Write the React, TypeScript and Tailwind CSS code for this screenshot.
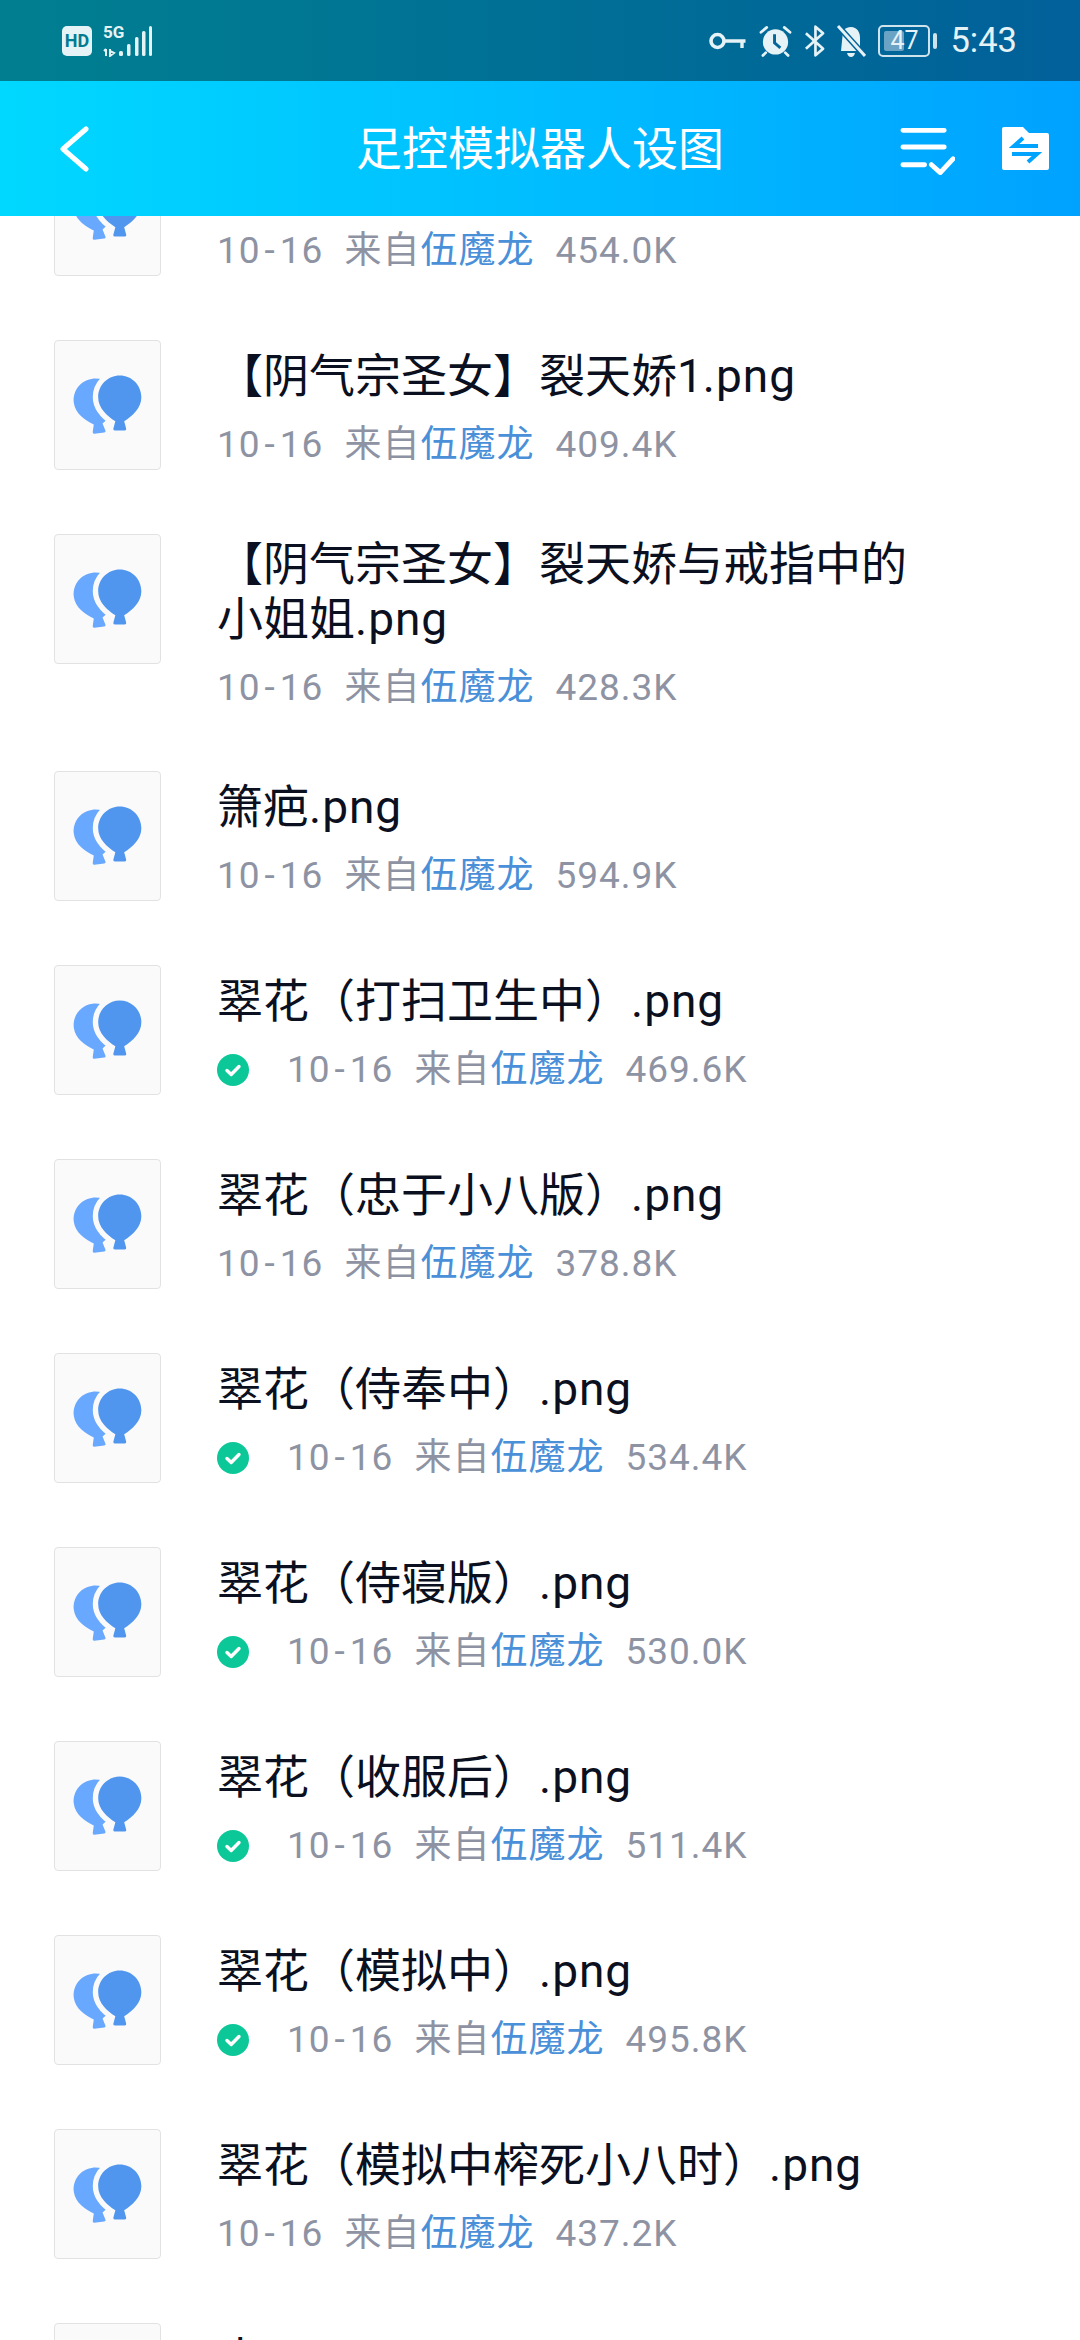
const files = [
  { title: "【阴气宗圣女】裂天娇.png", size: "454.0K" },
  { title: "【阴气宗圣女】裂天娇1.png", size: "409.4K" },
  { title: "【阴气宗圣女】裂天娇与戒指中的小姐姐.png", size: "428.3K" },
  { title: "箫疤.png", size: "594.9K" },
  { title: "翠花（打扫卫生中）.png", size: "469.6K", done: true },
  { title: "翠花（忠于小八版）.png", size: "378.8K" },
  { title: "翠花（侍奉中）.png", size: "534.4K", done: true },
  { title: "翠花（侍寝版）.png", size: "530.0K", done: true },
  { title: "翠花（收服后）.png", size: "511.4K", done: true },
  { title: "翠花（模拟中）.png", size: "495.8K", done: true },
  { title: "翠花（模拟中榨死小八时）.png", size: "437.2K" },
  { title: "小八.png", size: "501.2K" },
];

const BALLOON =
  "M66 35C78.2 35 88 44.8 88 57C88 68 79 76 70.5 81.5L72.5 89Q73 91 71 91L61 91Q59 91 59.5 89L61.5 81.5C53 76 44 68 44 57C44 44.8 53.8 35 66 35Z";

const FileIcon = () => (
  <div className="mt-8 h-[130px] w-[107px] shrink-0 self-start rounded-[4px] border border-[#e2e2e2] bg-[#fafafa]">
    <svg viewBox="0 0 107 130" className="h-full w-full">
      <path d={BALLOON} fill="#69a8ff" transform="translate(-25 3) rotate(-7 66 57)" />
      <path d={BALLOON} fill="#5096ee" stroke="#fafafa" strokeWidth="11" paintOrder="stroke" />
    </svg>
  </div>
);

const CheckBadge = () => (
  <svg viewBox="0 0 32 32" className="mr-[38px] h-8 w-8 shrink-0">
    <circle cx="16" cy="16" r="16" fill="#0cc898" />
    <path d="M10 16.5l4.2 4L22 12.5" fill="none" stroke="#fff" strokeWidth="3.4" strokeLinecap="round" strokeLinejoin="round" />
  </svg>
);

const FileRow = ({ title, size, done }: { title: string; size: string; done?: boolean }) => (
  <div className="flex min-h-[194px] items-center pl-[54px]">
    <FileIcon />
    <div className="ml-[56px] w-[722px] pt-[35px] pb-[26px]">
      <div className="text-[46px] leading-[55px] text-[#0b1020]">
        {title.slice(0, -4)}
        <span className="tracking-[1px]">.png</span>
      </div>
      <div className="mt-[16px] flex h-[50px] items-center text-[37px] leading-[50px] tracking-[1px] text-[#8e93a3]">
        {done && <CheckBadge />}
        <span>
          10<span className="mx-[4px]">-</span>16
        </span>
        <span className="ml-[21px]">来自</span>
        <span className="text-[#4a90d9]">伍魔龙</span>
        <span className="ml-[21px]">{size}</span>
      </div>
    </div>
  </div>
);

const StatusBar = () => (
  <div className="flex h-[81px] items-center justify-between bg-gradient-to-r from-[#017f90] to-[#02609a] pl-[62px] pr-[63px] text-[#e5f2f6]">
    <div className="flex items-center gap-[11px]">
      <div className="flex h-[30px] w-[30px] items-center justify-center rounded-[5px] bg-[#e5f2f6] text-[18px] leading-none font-bold text-[#017b90]">
        HD
      </div>
      <div className="relative h-[32px] w-[49px]">
        <span className="absolute top-[-2px] left-0 text-[17px] leading-[18px] font-bold">5G</span>
        <svg viewBox="0 0 49 32" className="absolute inset-0 h-full w-full">
          <path d="M3 24v7M1 26l2-2M7 24v7l4-3-4-2" fill="none" stroke="#e5f2f6" strokeWidth="2" />
          <g fill="#e5f2f6">
            <rect x="16" y="26" width="4" height="5" rx="1.5" />
            <rect x="24" y="19" width="3.5" height="12" rx="1.5" />
            <rect x="32" y="12" width="3.5" height="19" rx="1.5" />
            <rect x="39" y="6" width="3.5" height="25" rx="1.5" />
            <rect x="46" y="1" width="3" height="30" rx="1.5" />
          </g>
        </svg>
      </div>
    </div>
    <div className="flex items-center">
      <svg viewBox="0 0 38 20" className="h-[20px] w-[39px]">
        <circle cx="9" cy="10" r="6.5" fill="none" stroke="#e5f2f6" strokeWidth="3.6" />
        <path d="M15 10h22M33.5 10v7" fill="none" stroke="#e5f2f6" strokeWidth="3.4" />
      </svg>
      <svg viewBox="0 0 34 34" className="ml-[12px] h-[34px] w-[33px]">
        <circle cx="17" cy="18" r="13" fill="#e5f2f6" />
        <path d="M16 10v9l6 5" fill="none" stroke="#02669a" strokeWidth="3" />
        <path d="M2 8l6-5M32 8l-6-5M7 29l-3 3M27 29l3 3" fill="none" stroke="#e5f2f6" strokeWidth="2.8" strokeLinecap="round" />
      </svg>
      <svg viewBox="0 0 22 34" className="ml-[12px] h-[34px] w-[21px]">
        <path d="M2 9l18 16-8 7V2l8 7L2 25" fill="none" stroke="#e5f2f6" strokeWidth="2.8" strokeLinejoin="round" />
      </svg>
      <svg viewBox="0 0 30 34" className="ml-[11px] h-[34px] w-[30px]">
        <path d="M15 3c6 0 9 5 9 11v9l4 4H5l2-20c2-3 5-4 8-4z" fill="#e5f2f6" />
        <path d="M11 29h8q-1 4-4 4t-4-4z" fill="#e5f2f6" />
        <path d="M2 2l27 30" stroke="#02649a" strokeWidth="6" />
        <path d="M2 2l27 30" stroke="#e5f2f6" strokeWidth="3" />
      </svg>
      <div className="relative ml-[12px] flex h-[32px] w-[52px] items-center justify-center rounded-[5px] border-2 border-[#cfe3ec] text-[25px] leading-none">
        <div className="absolute top-[4px] bottom-[4px] left-[4px] w-[20px] rounded-[2px] bg-[#6ba3c4]" />
        <span className="relative">47</span>
      </div>
      <div className="ml-[3px] h-[16px] w-[4px] rounded-[2px] bg-[#cfe3ec]" />
      <span className="ml-[13px] text-[34.5px] leading-none">5:43</span>
    </div>
  </div>
);

const TopBar = () => (
  <div className="relative flex h-[135px] items-center justify-between bg-gradient-to-r from-[#00d8ff] to-[#00a2ff] pl-[59px] pr-[31px]">
    <svg viewBox="0 0 30 46" className="h-[46px] w-[30px]">
      <path d="M27 3L4 23l23 20" fill="none" stroke="#fff" strokeWidth="5" strokeLinecap="round" strokeLinejoin="round" />
    </svg>
    <span className="absolute left-0 w-full text-center text-[46px] leading-[60px] text-white">足控模拟器人设图</span>
    <div className="flex items-center gap-[47px]">
      <svg viewBox="0 0 56 52" className="h-[52px] w-[55px]">
        <path d="M3 7h42M3 24h42M3 42h22" stroke="#fff" strokeWidth="5" strokeLinecap="round" />
        <path d="M32 42l9 8 13-14" fill="none" stroke="#fff" strokeWidth="5" strokeLinecap="round" strokeLinejoin="round" />
      </svg>
      <svg viewBox="0 0 47 43" className="h-[43px] w-[47px]">
        <path d="M0 2q0-2 2-2h19l6 6h18q2 0 2 2v33q0 2-2 2H2q-2 0-2-2z" fill="#fff" />
        <path d="M21 11l-9 8h24M10 27h25l-9 8" fill="none" stroke="#00a4ff" strokeWidth="4" />
      </svg>
    </div>
  </div>
);

export default function App() {
  return (
    <div className="flex h-[2340px] w-[1080px] flex-col overflow-hidden bg-white font-['Roboto','Noto_Sans_CJK_SC',sans-serif]">
      <div className="shrink-0">
        <StatusBar />
        <TopBar />
      </div>
      <div className="min-h-0 flex-1 overflow-hidden">
        <div className="mt-[-102px]">
          {files.map((f) => (
            <FileRow key={f.title} {...f} />
          ))}
        </div>
      </div>
    </div>
  );
}
